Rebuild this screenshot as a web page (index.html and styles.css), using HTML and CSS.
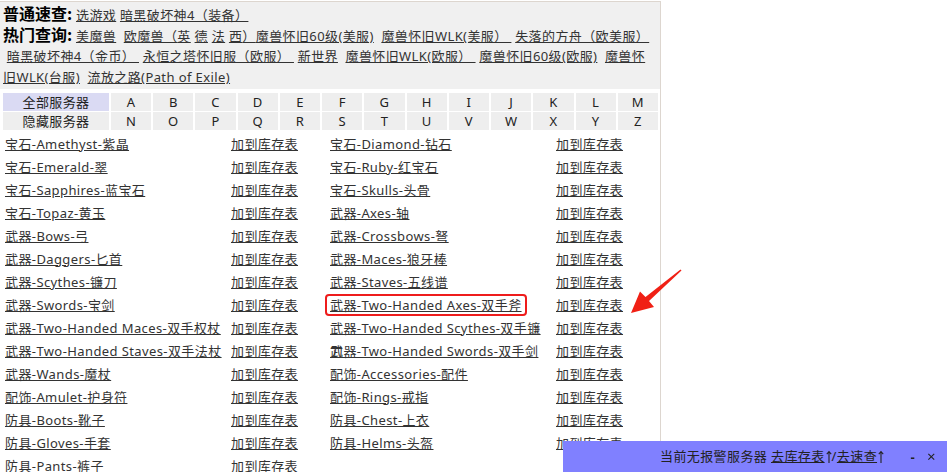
FILE: index.html
```html
<!DOCTYPE html>
<html lang="zh-CN">
<head>
  <meta charset="UTF-8" />
  <title>库存表 - 服务器列表</title>
  <link rel="stylesheet" href="styles.css">
</head>
<body>
  <div class="wrap">
    <!-- 顶部快速入口 -->
    <div class="quick">
      <div class="quick-line"><b class="quick-title">普通速查:</b> <a href="#">选游戏</a> <a href="#">暗黑破坏神4（装备） </a></div>
      <div class="quick-line"><b class="quick-title">热门查询:</b> <a href="#">美魔兽</a> &nbsp;<a href="#">欧魔兽（</a><a href="#">英</a> <a href="#">德</a> <a href="#">法</a> <a href="#">西</a><a href="#">）</a><a href="#">魔兽怀旧60级(美服)</a> &nbsp;<a href="#">魔兽怀旧WLK(美服） </a> &nbsp;<a href="#">失落的方舟（欧美服）</a>
        &nbsp;<a href="#">暗黑破坏神4（金币） </a> &nbsp;<a href="#">永恒之塔怀旧服（欧服） </a> &nbsp;<a href="#">新世界</a> &nbsp;<a href="#">魔兽怀旧WLK(欧服） </a> &nbsp;<a href="#">魔兽怀旧60级(欧服)</a> &nbsp;<a href="#">魔兽怀旧WLK(台服)</a> &nbsp;<a href="#">流放之路(Path of Exile)</a></div>
    </div>

    <!-- 服务器字母索引 -->
    <div class="letters">
      <div class="cell first active">全部服务器</div>
      <div class="cell">A</div><div class="cell">B</div><div class="cell">C</div><div class="cell">D</div><div class="cell">E</div><div class="cell">F</div><div class="cell">G</div><div class="cell">H</div><div class="cell">I</div><div class="cell">J</div><div class="cell">K</div><div class="cell">L</div><div class="cell">M</div>
      <div class="cell first">隐藏服务器</div>
      <div class="cell">N</div><div class="cell">O</div><div class="cell">P</div><div class="cell">Q</div><div class="cell">R</div><div class="cell">S</div><div class="cell">T</div><div class="cell">U</div><div class="cell">V</div><div class="cell">W</div><div class="cell">X</div><div class="cell">Y</div><div class="cell">Z</div>
    </div>

    <!-- 物品列表 -->
    <ul class="items" id="items"></ul>

    <svg class="arrow" width="70" height="56" viewBox="620 262 70 56">
      <polygon points="681.5,269.5 649,300 654,306 631,312 640,290.5 645.5,296 680.5,268.5" fill="#f02015" />
    </svg>
  </div>

  <div class="alarm-bar">
    当前无报警服务器 <a href="#">去库存表<svg class="up" width="6" height="13" viewBox="0 0 6 13"><path d="M3 1.5V13M0.8 4.2L3 1.5L5.2 4.2" fill="none" stroke="#222" stroke-width="1.1"/></svg></a>/<a href="#">去速查<svg class="up" width="6" height="13" viewBox="0 0 6 13"><path d="M3 1.5V13M0.8 4.2L3 1.5L5.2 4.2" fill="none" stroke="#222" stroke-width="1.1"/></svg></a>
    <span class="bar-btns"><span class="bar-min">-</span><span class="bar-close">×</span></span>
  </div>

  <script>
    const items = [
      '宝石-Amethyst-紫晶', '宝石-Diamond-钻石',
      '宝石-Emerald-翠', '宝石-Ruby-红宝石',
      '宝石-Sapphires-蓝宝石', '宝石-Skulls-头骨',
      '宝石-Topaz-黄玉', '武器-Axes-轴',
      '武器-Bows-弓', '武器-Crossbows-弩',
      '武器-Daggers-匕首', '武器-Maces-狼牙棒',
      '武器-Scythes-镰刀', '武器-Staves-五线谱',
      '武器-Swords-宝剑', '武器-Two-Handed Axes-双手斧',
      '武器-Two-Handed Maces-双手权杖', '武器-Two-Handed Scythes-双手镰刀',
      '武器-Two-Handed Staves-双手法杖', '武器-Two-Handed Swords-双手剑',
      '武器-Wands-魔杖', '配饰-Accessories-配件',
      '配饰-Amulet-护身符', '配饰-Rings-戒指',
      '防具-Boots-靴子', '防具-Chest-上衣',
      '防具-Gloves-手套', '防具-Helms-头盔',
      '防具-Pants-裤子'
    ];
    const marked = '武器-Two-Handed Axes-双手斧';

    const list = document.getElementById('items');
    items.forEach(name => {
      const li = document.createElement('li');
      const cls = name === marked ? 'name hl' : 'name';
      li.innerHTML = `<span class="name-cell"><a href="#" class="${cls}">${name}</a></span><a href="#" class="add">加到库存表</a>`;
      list.appendChild(li);
    });
  </script>
</body>
</html>
```

FILE: styles.css
```css
* {
  box-sizing: border-box;
  margin: 0;
  padding: 0;
}

html, body {
  height: 100%;
  overflow: hidden;
}

body {
  font-family: "Noto Sans", "Noto Sans CJK SC", sans-serif;
  font-size: 13px;
  letter-spacing: 0.4px;
  color: #333;
  background: #fff;
}

a {
  color: #333;
  text-decoration: underline;
}

.wrap {
  width: 661px;
  min-height: 100%;
  border-top: 1px solid #ddd6cf;
  border-right: 1px solid #ddd6cf;
  margin-top: 1px;
  position: relative;
}

.quick {
  background: #f0f0f0;
  padding: 3px 4px 1px 3px;
  line-height: 20.7px;
}

.quick-title {
  font-family: "Noto Sans CJK SC", sans-serif;
  font-size: 16px;
  line-height: 1;
  letter-spacing: 0;
  color: #000;
}

.letters {
  display: grid;
  grid-template-columns: 106px repeat(13, 1fr);
  grid-auto-rows: 18px;
  gap: 1px 2px;
  padding: 4px 2px 0 3px;
}

.cell {
  background: #eeeeee;
  text-align: center;
  line-height: 18px;
  color: #222;
}

.cell.active {
  background: #dadaf3;
}

.items {
  list-style: none;
  display: grid;
  grid-template-columns: 325px 1fr;
  padding: 3px 0 0 5px;
}

.items li {
  display: grid;
  grid-template-columns: 220px 1fr;
  height: 23px;
  line-height: 23px;
}

.name-cell {
  height: 23px;
}

.add {
  margin-left: 6px;
}

.hl {
  outline: 2px solid #ee1c1c;
  border-radius: 2px;
  padding: 0 3px;
  margin: 0 -3px;
}

.arrow {
  position: absolute;
  left: 620px;
  top: 261px;
}

.alarm-bar {
  position: fixed;
  right: 0;
  bottom: 0;
  width: 384px;
  height: 31px;
  line-height: 31px;
  padding-left: 97px;
  background: #8080ff;
  color: #222;
}

.alarm-bar a {
  color: #222;
}

.up {
  vertical-align: -2px;
  margin-left: 1px;
}

.bar-btns {
  position: absolute;
  right: 11px;
  top: 0;
}

.bar-min {
  margin-right: 12px;
  font-weight: bold;
}

.bar-close {
  font-size: 15px;
}
```
